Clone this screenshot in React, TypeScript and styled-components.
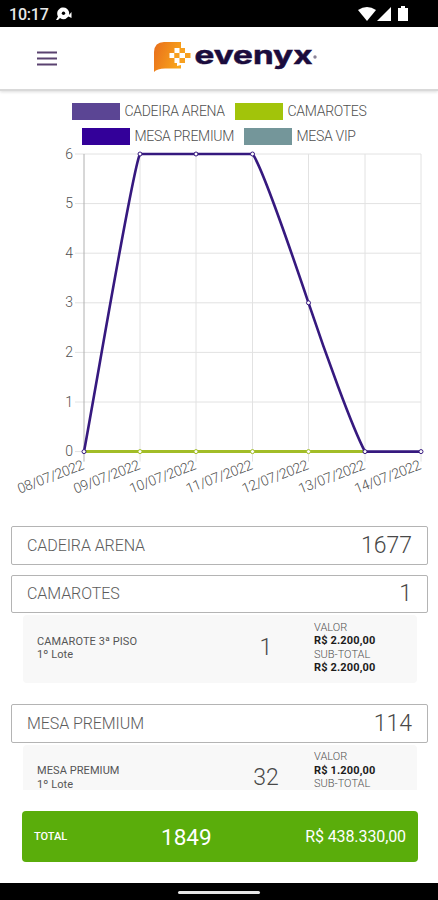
import React from "react";
import styled, { createGlobalStyle } from "styled-components";

const GlobalStyle = createGlobalStyle`
  * { box-sizing: border-box; }
  body { margin: 0; background: #fff; font-family: Roboto, "Liberation Sans", sans-serif; }
`;

const Screen = styled.div`
  width: 438px;
  height: 900px;
  display: flex;
  flex-direction: column;
  overflow: hidden;
  background: #fff;
  color: #666;
`;

const StatusBar = styled.div`
  height: 27px;
  flex: none;
  background: #000;
  display: flex;
  justify-content: space-between;
  align-items: center;
  padding: 1px 28px 0 9px;
`;

const StatusGroup = styled.div`
  display: flex;
  align-items: center;
  gap: 7px;
`;

const Clock = styled.span`
  font-size: 16px;
  line-height: 20px;
  font-weight: 500;
  color: #e8e8e8;
  letter-spacing: -0.2px;
  margin-top: 2px;
`;

const Header = styled.header`
  height: 64px;
  flex: none;
  display: flex;
  align-items: flex-start;
  border-bottom: 2px solid #d9d9d9;
  box-shadow: 0 1px 3px rgba(0, 0, 0, 0.14);
`;

const MenuIcon = styled.svg`
  margin: 23px 0 0 37px;
`;

const Logo = styled.svg`
  margin: 11px 0 0 95px;
`;

const Legend = styled.div`
  flex: none;
  margin-top: 12px;
  height: 47px;
`;

const LegendRow = styled.div<{ $left: number }>`
  display: flex;
  height: 17px;
  margin-bottom: 7.5px;
  padding-left: ${(p) => p.$left}px;
`;

const LegendItem = styled.div<{ $width: number }>`
  display: flex;
  gap: 5px;
  width: ${(p) => p.$width}px;
  font-size: 14px;
  line-height: 16px;
  font-weight: 300;
  white-space: nowrap;
  letter-spacing: -0.3px;
  color: #505050;
`;

const Swatch = styled.span<{ $color: string }>`
  width: 48px;
  height: 17px;
  flex: none;
  background: ${(p) => p.$color};
`;

const Chart = styled.svg`
  flex: none;
  display: block;
  overflow: visible;
`;

const List = styled.main`
  height: 264px;
  flex: none;
  overflow: hidden;
  padding: 0 10px 0 11px;
`;

const Sector = styled.section`
  margin-bottom: 10px;
`;

const SectorHead = styled.div`
  height: 38.5px;
  border: 1.5px solid #b4b4b4;
  border-radius: 2px;
  display: flex;
  align-items: center;
  justify-content: space-between;
  padding: 0 15px;
`;

const SectorName = styled.span`
  font-size: 16px;
  color: #5c5c5c;
  font-weight: 300;
  letter-spacing: -0.08px;
`;

const SectorCount = styled.span`
  font-size: 23px;
  font-weight: 300;
  color: #484848;
`;

const Lot = styled.div`
  margin: 2px 11px 0 12px;
  height: 68px;
  background: #f8f8f8;
  border-radius: 4px;
  display: grid;
  grid-template-columns: 200px 91px 1fr;
  align-items: center;
  padding-left: 14px;
`;

const LotName = styled.div`
  margin-top: -2px;
  font-size: 11px;
  line-height: 13.4px;
  letter-spacing: 0.08px;
  color: #555;
`;

const LotCount = styled.div`
  margin-top: -3px;
  width: 58px;
  text-align: center;
  font-size: 23px;
  font-weight: 300;
  color: #484848;
`;

const LotPrices = styled.div`
  margin: -3px 0 0 -14px;
  font-size: 11px;
  line-height: 13.4px;
  font-weight: 300;
  color: #505050;
`;

const Amount = styled.strong`
  display: block;
  min-height: 13.4px;
  font-weight: 700;
  color: #1c1c1c;
  letter-spacing: 0.15px;
`;

const Total = styled.footer`
  height: 51px;
  flex: none;
  margin: 21px 20px 0 22px;
  border-radius: 4px;
  background: #5aad0b;
  color: #fff;
  display: grid;
  grid-template-columns: 127px 1fr auto;
  align-items: center;
  padding: 0 12px;
`;

const TotalLabel = styled.span`
  font-size: 11px;
  font-weight: 500;
`;

const TotalCount = styled.span`
  font-size: 22.5px;
`;

const TotalValue = styled.span`
  font-size: 16px;
  letter-spacing: -0.1px;
`;

const NavBar = styled.div`
  height: 17px;
  flex: none;
  margin-top: auto;
  background: #000;
  display: flex;
  justify-content: center;
  align-items: center;
`;

const Handle = styled.span`
  width: 82px;
  height: 3px;
  margin-top: 2px;
  border-radius: 2px;
  background: #e6e6e6;
`;

const days = ["08", "09", "10", "11", "12", "13", "14"];
const xs = [84, 140, 196, 252.5, 308.5, 365, 421];
const levels = [0, 1, 2, 3, 4, 5, 6];
const TOP = 4;
const STEP = 49.6;
const yOf = (v: number) => TOP + (6 - v) * STEP;
const premium = [0, 6, 6, 6, 3, 0, 0];

function SalesChart() {
  return (
    <Chart width="438" height="376" viewBox="0 0 438 376">
      <g strokeWidth="1">
        {levels.map((v) => (
          <line key={v} x1="75" x2="421" y1={yOf(v)} y2={yOf(v)} stroke="#e2e2e2" />
        ))}
        {xs.map((x, i) => (
          <line key={x} x1={x} x2={x} y1={TOP} y2={yOf(0) + 10} stroke={i ? "#e2e2e2" : "#b0b0b0"} />
        ))}
      </g>
      <g fontSize="14" fontWeight="300" fill="#505050" textAnchor="end">
        {levels.map((v) => (
          <text key={v} x="73" y={yOf(v) + 4.5}>{v}</text>
        ))}
        {days.map((d, i) => (
          <text
            key={d}
            transform={`translate(${xs[i] + 1} ${yOf(0) + 17}) rotate(-21)`}
            textLength="70"
          >
            {`${d}/07/2022`}
          </text>
        ))}
      </g>
      <path d={`M84 ${yOf(0)}H365`} stroke="#a2bd27" strokeWidth="3" />
      <path
        d={`M84 ${yOf(0)}C98 226 133 ${TOP + 12} 140 ${TOP}H252.5C262 ${TOP + 12} 292 104 308.5 ${yOf(3)}C325 202 352 277 365 ${yOf(0)}H421`}
        fill="none"
        stroke="#36197f"
        strokeWidth="2.6"
        strokeLinejoin="round"
      />
      {xs.map((x, i) => (
        <g key={x} fill="#fff" strokeWidth="1">
          <circle cx={x} cy={yOf(0)} r="2" stroke={i > 0 && i < 5 ? "#a2bd27" : "#36197f"} />
          {premium[i] > 0 && <circle cx={x} cy={yOf(premium[i])} r="2" stroke="#36197f" />}
        </g>
      ))}
    </Chart>
  );
}

function EvenyxLogo() {
  return (
    <Logo width="168" height="38" viewBox="152 38 168 38">
      <defs>
        <linearGradient id="flame" x1="0" y1="0.2" x2="1" y2="0.6">
          <stop offset="0" stopColor="#e9711c" />
          <stop offset="1" stopColor="#f9a61a" />
        </linearGradient>
      </defs>
      <path d="M154 72V52Q154.500 42 164 42H181V48H177V66L181 65V68.500H165Q157 68.500 154 72Z" fill="url(#flame)" />
      <g fill="#fff">
        <rect x="169.500" y="53" width="5" height="5" />
        <rect x="174.500" y="48" width="5" height="5" />
        <rect x="174.500" y="58" width="5" height="5" />
      </g>
      <g fill="#f7a020">
        <rect x="174.500" y="53" width="5" height="5" />
        <rect x="179.500" y="48" width="5.500" height="5" />
        <rect x="185" y="53" width="5.500" height="5" />
        <rect x="179.500" y="58" width="5.500" height="5" />
      </g>
      <text
        x="194.500"
        y="63.500"
        fontFamily="Inter, sans-serif"
        fontWeight="700"
        fontSize="25"
        fill="#1b0c3d"
        stroke="#1b0c3d"
        strokeWidth="0.5"
        textLength="118"
        lengthAdjust="spacingAndGlyphs"
      >
        evenyx
      </text>
      <circle cx="315" cy="57" r="1.700" fill="#8b8498" />
    </Logo>
  );
}

interface LotData { name: string; count: number; price: string; subtotal?: string }

function LotRow({ name, count, price, subtotal }: LotData) {
  return (
    <Lot>
      <LotName>{name}<br />1º Lote</LotName>
      <LotCount>{count}</LotCount>
      <LotPrices>
        VALOR<Amount>{price}</Amount>
        SUB-TOTAL<Amount>{subtotal}</Amount>
      </LotPrices>
    </Lot>
  );
}

function SectorTitle({ name, count }: { name: string; count: number }) {
  return (
    <SectorHead>
      <SectorName>{name}</SectorName>
      <SectorCount>{count}</SectorCount>
    </SectorHead>
  );
}

const LotSector = styled(Sector)`
  margin-bottom: 21px;
`;

export default function App() {
  return (
    <Screen>
      <GlobalStyle />
      <StatusBar>
        <StatusGroup>
          <Clock>10:17</Clock>
          <svg width="16" height="14" viewBox="0 0 16 14">
            <path d="M0 13L2 9.500A6 6 0 1 1 13 8L15.500 5V11L12.500 9.500Q8.500 14 4 11L2 13Z" fill="#fff" />
            <circle cx="7.500" cy="6.200" r="1.700" fill="#000" />
          </svg>
        </StatusGroup>
        <svg width="52" height="16" viewBox="0 0 52 16" fill="#fff">
          <path d="M0 4Q9 -2 18 4L9 15Z" />
          <path d="M33 1V15H19Z" />
          <path d="M40 2H43V0H47V2H50V15H40Z" />
        </svg>
      </StatusBar>
      <Header>
        <MenuIcon width="20" height="17" viewBox="0 0 20 17">
          <path d="M0 2.500H20M0 8.500H20M0 14.500H20" stroke="#5a4270" strokeWidth="2" />
        </MenuIcon>
        <EvenyxLogo />
      </Header>
      <Legend>
        <LegendRow $left={71.5}>
          <LegendItem $width={163}><Swatch $color="#5b4594" />CADEIRA ARENA</LegendItem>
          <LegendItem $width={140}><Swatch $color="#a2c40a" />CAMAROTES</LegendItem>
        </LegendRow>
        <LegendRow $left={81.5}>
          <LegendItem $width={162}><Swatch $color="#330099" />MESA PREMIUM</LegendItem>
          <LegendItem $width={130}><Swatch $color="#74969a" />MESA VIP</LegendItem>
        </LegendRow>
      </Legend>
      <SalesChart />
      <List>
        <Sector><SectorTitle name="CADEIRA ARENA" count={1677} /></Sector>
        <LotSector>
          <SectorTitle name="CAMAROTES" count={1} />
          <LotRow name="CAMAROTE 3ª PISO" count={1} price="R$ 2.200,00" subtotal="R$ 2.200,00" />
        </LotSector>
        <LotSector>
          <SectorTitle name="MESA PREMIUM" count={114} />
          <LotRow name="MESA PREMIUM" count={32} price="R$ 1.200,00" />
        </LotSector>
      </List>
      <Total>
        <TotalLabel>TOTAL</TotalLabel>
        <TotalCount>1849</TotalCount>
        <TotalValue>R$ 438.330,00</TotalValue>
      </Total>
      <NavBar><Handle /></NavBar>
    </Screen>
  );
}
